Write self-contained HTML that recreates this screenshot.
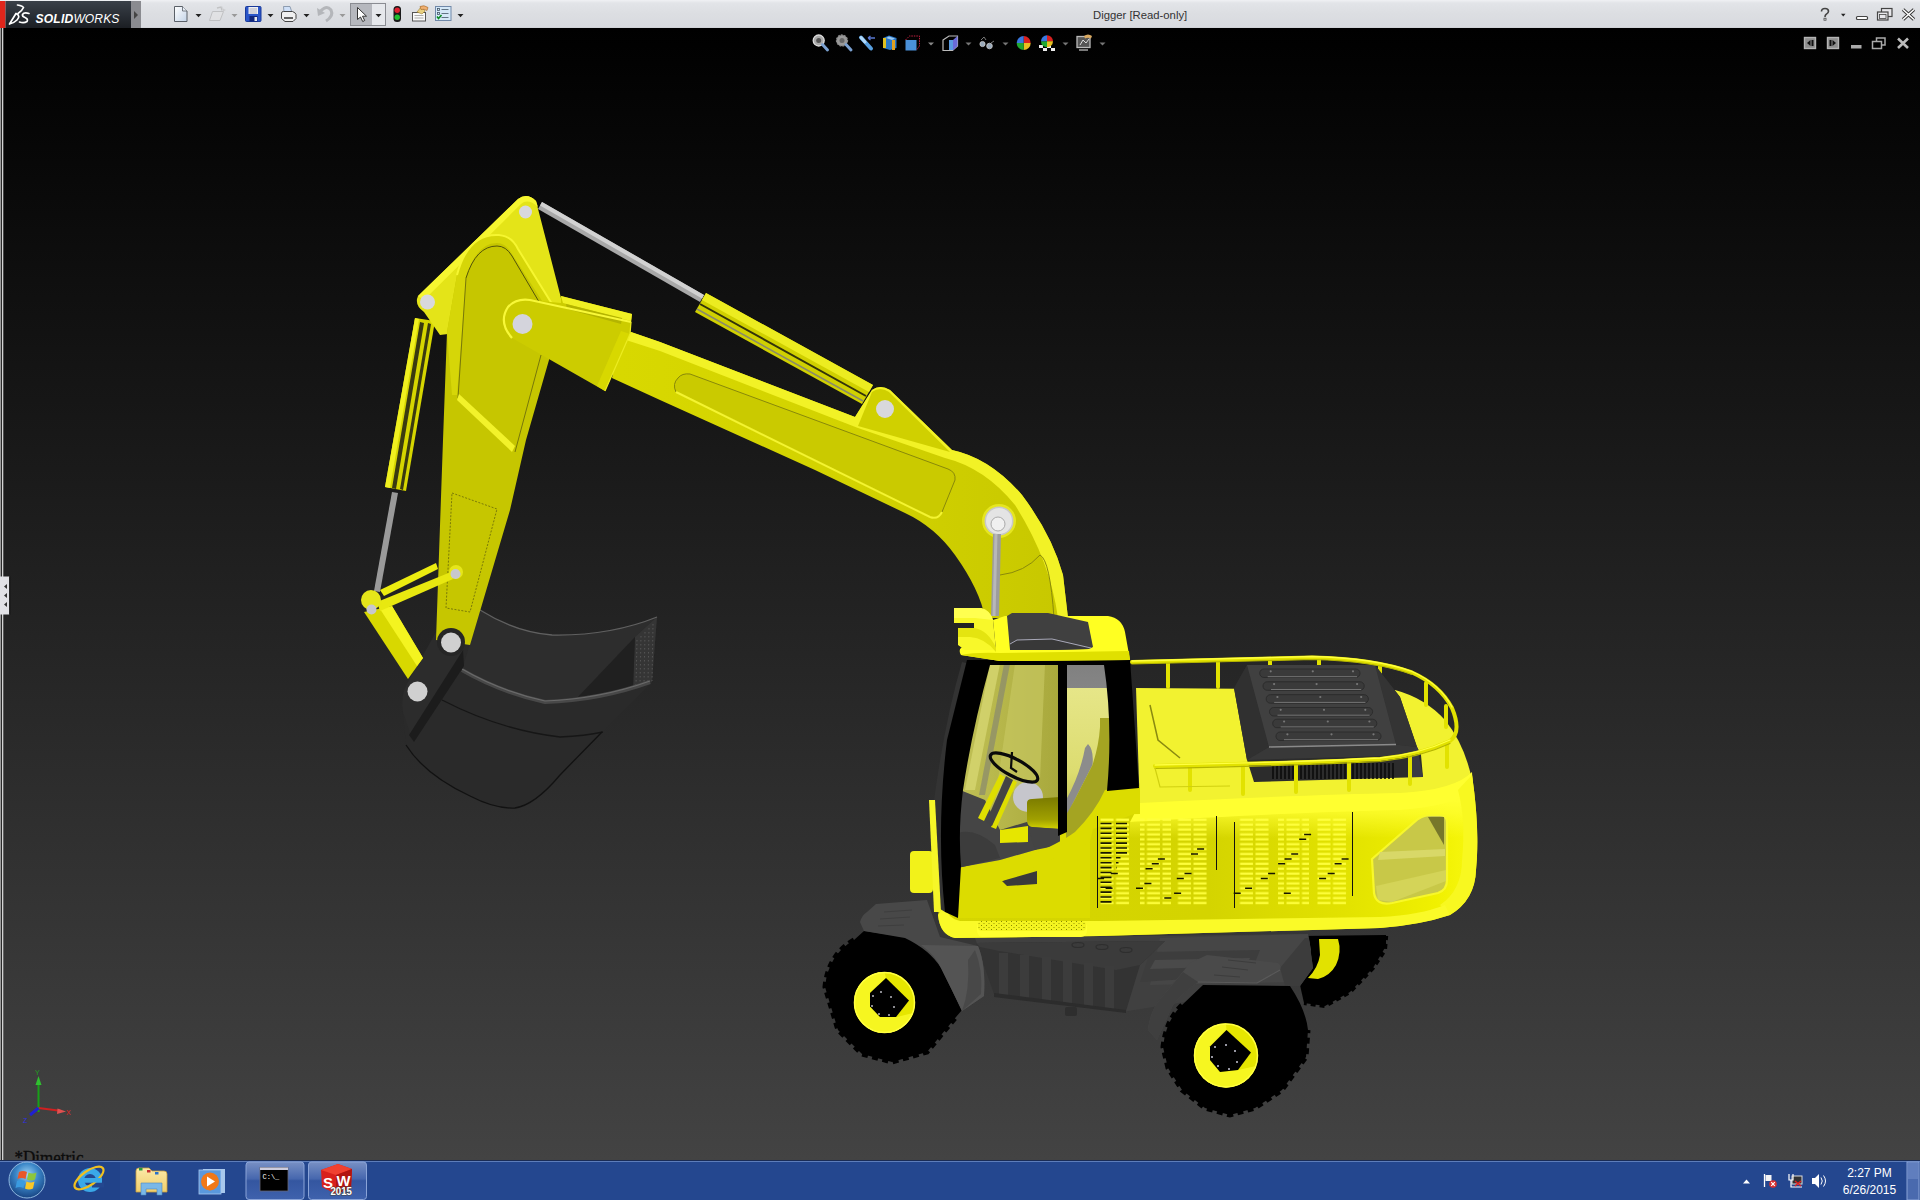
<!DOCTYPE html>
<html><head><meta charset="utf-8"><title>Digger [Read-only]</title>
<style>
html,body{margin:0;padding:0;width:1920px;height:1200px;overflow:hidden;background:#000;font-family:"Liberation Sans",sans-serif;}
#vp{position:absolute;left:0;top:28px;width:1920px;height:1132px;background:linear-gradient(#000 0%,#434343 100%);}
#tb{position:absolute;left:0;top:0;width:1920px;height:28px;background:linear-gradient(#f0f1f4 0,#e2e4e8 3px,#dcdee2 14px,#d8dadf 27px,#c9cbd0 28px);}
#task{position:absolute;left:0;top:1160px;width:1920px;height:40px;background:linear-gradient(90deg,#1d3f8e 0,#234a9c 8%,#1f4796 25%,#20479a 60%,#1b3c86 80%,#1e4492 100%);}
#task:before{content:"";position:absolute;left:0;top:0;width:100%;height:2px;background:linear-gradient(#16254f,#5f7fc0);}
svg{position:absolute;left:0;top:0;}
.t{position:absolute;white-space:nowrap;}
</style></head><body>
<div id="vp"></div>
<div id="tb"></div>
<div id="task"></div>
<svg id="model" width="1920" height="1200" viewBox="0 0 1920 1200">
<defs>
<linearGradient id="gRod" x1="0" y1="0" x2="0" y2="1"><stop offset="0" stop-color="#d0d0d0"/><stop offset=".5" stop-color="#b4b4b4"/><stop offset="1" stop-color="#808080"/></linearGradient>
<linearGradient id="gBoom" gradientUnits="userSpaceOnUse" x1="620" y1="0" x2="1060" y2="0"><stop offset="0" stop-color="#d8d800"/><stop offset=".55" stop-color="#d2d200"/><stop offset="1" stop-color="#c8c800"/></linearGradient>
</defs>
<!-- ===== bucket ===== -->
<g id="bucket">
<path d="M480,610 Q515,632 552,635 Q610,636 657,617 L652,682 L602,732 L560,775 Q535,805 515,808 Q495,809 470,796 Q425,775 406,745 L402,705 L445,640 Z" fill="#2a2a2a"/>
<path d="M480,610 Q515,632 552,635 Q610,636 657,617 L635,637 L578,697 Q545,705 515,695 L462,670 Z" fill="#2d2d2d"/>
<path d="M635,637 L657,617 L652,682 L633,688 Z" fill="#353535"/>
<path d="M635,637 L578,697 L633,688 Z" fill="#202020"/>
<g stroke="#555" stroke-width="1" stroke-dasharray="1.500 2.500"><path d="M637,640 L636,686"/><path d="M641,636 L640,685"/><path d="M645,632 L644,684"/><path d="M649,628 L648,683"/><path d="M653,624 L652,681"/></g>
<path d="M480,610 Q515,632 552,635 Q610,636 657,617" fill="none" stroke="#606060" stroke-width="1.300"/>
<path d="M462,670 Q500,692 545,702 Q600,700 650,682" fill="none" stroke="#484848" stroke-width="4"/>
<path d="M462,669 Q500,691 545,701 Q600,699 650,681" fill="none" stroke="#6a6a6a" stroke-width="1.200"/>
<path d="M442,700 Q500,730 560,737 Q585,736 603,732" fill="none" stroke="#161616" stroke-width="1.300"/>
<path d="M406,745 Q425,775 470,796 Q495,809 515,808 Q535,805 560,775 L602,732" fill="none" stroke="#121212" stroke-width="1.300"/>
<!-- bracket -->
<path d="M440,625 Q455,618 465,632 L463,652 L411,737 L403,712 Q400,695 408,682 Z" fill="#2c2c2c"/>
<path d="M463,650 L409,735 L414,742 L464,666 Z" fill="#1c1c1c"/>
</g>
<!-- ===== bucket link (yellow bar down to bucket) ===== -->
<path d="M364,612 L392,606 L423,658 L408,679 Z" fill="#d8d800"/>
<path d="M380,609 L392,606 L423,658 L417,666 Z" fill="#f4f420"/>
<!-- bucket cylinder rod -->
<path d="M392,492 L398,493 L380,592 L374,591 Z" fill="#9a9a9a"/>
<!-- bucket cylinder body -->
<path d="M415,318 L435,321 L406,491 L385,487 Z" fill="#d6d600"/>
<path d="M420,322 L424,323 L396,489 L392,488 Z" fill="#3a3a10"/>
<path d="M428,323 L431,324 L403,490 L400,489 Z" fill="#3a3a10"/>
<path d="M415,318 L419,319 L390,488 L385,487 Z" fill="#f0f020"/>
<!-- ===== stick ===== -->
<path d="M418,296 L518,199 Q527,192 536,201 L561,298 L561,320 L440,335 L424,312 Q414,305 418,296 Z" fill="#e4e418"/>
<path d="M418,296 L518,199 Q527,192 536,201 L538,207 Q528,198 521,204 L424,300 Z" fill="#f6f630"/>
<path d="M457,275 Q468,233 499,235 Q512,236 518,249 L557,312 L549,360 L526,440 L510,510 L470,645 L436,640 L443,440 L447,332 Z" fill="#c6c600"/>
<path d="M457,275 Q468,233 499,235 Q512,236 518,249 L557,312 L553,318 L512,254 Q506,243 497,243 Q476,243 466,278 L457,395 L452,395 L447,332 Z" fill="#d6d608"/>
<path d="M457,275 Q468,233 499,235 Q512,236 518,249 L557,312" fill="none" stroke="#f6f630" stroke-width="2"/>
<path d="M466,278 Q476,246 497,246 Q506,246 512,256 L545,312" fill="none" stroke="#55550a" stroke-width="1"/>
<path d="M466,278 L458,398" fill="none" stroke="#77770a" stroke-width="1"/>
<path d="M541,355 L515,452" fill="none" stroke="#77770a" stroke-width="1"/>
<path d="M457,400 L512,452 L515,446 L459,394 Z" fill="#f2f22a"/>
<path d="M452,493 L497,509 L470,612 L446,608 Z" fill="none" stroke="#66660a" stroke-width=".8" stroke-dasharray="2 1.5"/>
<!-- H link -->
<path d="M380,590 L436,563 L438,569 L384,596 Z" fill="#ecec10"/>
<path d="M377,602 L451,572 L453,579 L380,611 Z" fill="#e8e810"/>
<circle cx="371" cy="600" r="10" fill="#e6e61a"/>
<circle cx="456" cy="572" r="7" fill="#e6e61a"/>
<!-- pins on stick -->
<circle cx="525.500" cy="212" r="6.500" fill="#d8d8dc"/>
<circle cx="427.500" cy="302" r="7.500" fill="#d8d8dc"/>
<circle cx="371.500" cy="609.500" r="5" fill="#c8c8cc"/>
<circle cx="455.500" cy="574" r="5" fill="#c8c8cc"/>
<!-- bucket pins -->
<circle cx="451" cy="642" r="14" fill="#262626"/>
<circle cx="451" cy="642.500" r="10" fill="#d0d0d0"/>
<circle cx="417.500" cy="691.500" r="10" fill="#d0d0d0"/>
<!-- ===== boom ===== -->
<path d="M620,335 L631,332 L660,342 L855,417 L872,390 Q880,384 890,390 L952,450 Q990,458 1022,495 Q1052,535 1063,575 L1068,618 L985,618 Q980,590 955,555 Q935,527 905,513 L815,470 L660,400 L612,378 Z" fill="url(#gBoom)"/>
<path d="M631,332 L660,342 L855,417 L872,390 Q880,384 890,390 L952,450 Q990,458 1022,495 Q1052,535 1063,575 L1068,618 L1058,618 Q1050,560 1015,505 Q985,468 945,458 L858,428 L660,351 L626,340 Z" fill="#f2f226"/>
<path d="M858,426 L872,392 Q880,386 889,392 L950,452 Z" fill="#d0d000"/>
<!-- boom recess -->
<path d="M678,378 Q672,384 676,392 L930,517 Q938,520 942,512 L955,480 Q956,472 948,469 L690,374 Q682,373 678,378 Z" fill="#caca00" stroke="#88880a" stroke-width="1"/>
<path d="M676,392 L930,517 Q938,520 942,512" fill="none" stroke="#f4f430" stroke-width="2"/>
<path d="M1000,575 Q1025,572 1040,555 Q1050,560 1054,618" fill="none" stroke="#8a8a0a" stroke-width="1"/>
<!-- boom pins -->
<circle cx="885" cy="409" r="9" fill="#d8d8dc"/>
<circle cx="999" cy="521" r="17" fill="#e6e620"/>
<circle cx="999" cy="521" r="14.500" fill="#c8c8c8"/>
<circle cx="999" cy="521" r="13" fill="#e4e4e4"/>
<circle cx="998" cy="524" r="7" fill="#f0f0f0" stroke="#aaa" stroke-width="1"/>
<path d="M993,534 L1001,534 L999,616 L991,616 Z" fill="#9c9c9c"/><path d="M994.500,534 L997.500,534 L995.500,616 L992.500,616 Z" fill="#b8b8b8"/>
<!-- boom end bracket -->
<path d="M561,296 L632,314 L630,334 L605,391 L512,338 Q498,322 508,307 Q516,298 530,300 L561,303 Z" fill="#cccc00"/>
<path d="M561,296 L632,314 L631,321 L563,303 Z" fill="#f0f024"/>
<path d="M566,304 L622,318 L621,324 L567,309 Z" fill="#b4b400"/>
<path d="M512,338 Q498,322 508,307 Q516,298 530,300 L631,322" fill="none" stroke="#f8f838" stroke-width="2.200"/>
<path d="M630,334 L605,391 L597,386 L621,331 Z" fill="#d8d800"/>
<path d="M631,322 L630,334 L605,391" fill="none" stroke="#ecec20" stroke-width="1.200"/>
<circle cx="522.500" cy="324" r="10" fill="#d4d4dc"/>
<!-- ===== stick cylinder ===== -->
<path d="M538,209 L542,202 L704,295 L700,302 Z" fill="#a8a8a8"/>
<path d="M540,205.500 L542,202 L704,295 L702,298.500 Z" fill="#d2d2d2"/>
<path d="M706,293 L873,385 L862,404 L695,312 Z" fill="#d0d000"/>
<path d="M706,293 L873,385 L869,392 L702,300 Z" fill="#ecec20"/>
<path d="M700,304 L866,396" fill="none" stroke="#33330a" stroke-width="2"/>
<path d="M697,309 L863,401" fill="none" stroke="#8a8a6a" stroke-width="1.500"/>
<defs>
<linearGradient id="gSide" gradientUnits="userSpaceOnUse" x1="940" y1="0" x2="1478" y2="0"><stop offset="0" stop-color="#d6d600"/><stop offset=".5" stop-color="#d4d400"/><stop offset=".75" stop-color="#e2e200"/><stop offset=".92" stop-color="#f0f000"/><stop offset="1" stop-color="#f8f810"/></linearGradient>
<linearGradient id="gShoulder" gradientUnits="userSpaceOnUse" x1="0" y1="800" x2="0" y2="838"><stop offset="0" stop-color="#ffff30" stop-opacity="1"/><stop offset=".35" stop-color="#ffff30" stop-opacity=".75"/><stop offset="1" stop-color="#ffff30" stop-opacity="0"/></linearGradient>
<linearGradient id="gGlassF" x1="0" y1="0" x2="1" y2="0"><stop offset="0" stop-color="#c4c45a"/><stop offset=".5" stop-color="#b6b64a"/><stop offset="1" stop-color="#a8a83c"/></linearGradient>
<pattern id="vent" x="1100" y="817" width="15.5" height="4.9" patternUnits="userSpaceOnUse"><rect x="0.5" y="1.6" width="13" height="2.2" fill="#ffff3c"/></pattern>
<pattern id="dots" width="5" height="4" patternUnits="userSpaceOnUse"><rect width="5" height="4" fill="#f4f420"/><rect x="1" y="1" width="1" height="1" fill="#8a8a00"/><rect x="3.500" y="3" width="1" height="1" fill="#9a9a00"/></pattern>
</defs>
<!-- ===== far rear wheel ===== -->
<path d="M1300,936 L1386,935 L1386,946 L1373,968 L1350,992 L1325,1006 L1304,1003 L1300,985 Z" fill="#000"/>
<path d="M1302,940 L1386,938 L1385,950 L1373,968 L1350,992 L1325,1006 L1304,1003" fill="none" stroke="#000" stroke-width="4" stroke-dasharray="5 4"/>
<path d="M1319,939 L1338,939 Q1342,952 1336,965 Q1330,976 1318,979 L1308,978 Q1318,968 1320,955 Z" fill="#e2e200"/>
<!-- ===== undercarriage ===== -->
<g id="under">
<path d="M975,938 L1308,934 L1313,968 L1300,986 L1290,985 L1122,1012 L995,995 Z" fill="#404040"/>
<path d="M1160,938 L1308,934 L1311,950 L1295,982 L1150,985 Z" fill="#464646"/>
<path d="M1280,968 L1305,938 L1309,938 L1313,968 L1300,986 L1285,986 Z" fill="#3c3c3c"/>
<path d="M1150,952 L1260,950 L1250,975 L1140,982 Z" fill="#3d3d3d"/>
<path d="M1155,960 L1250,958 L1246,966 L1150,969 Z" fill="#4a4a4a"/>
<path d="M976,943 L1165,941 L1140,965 L1126,1011 L994,994 Z" fill="#333"/>
<path d="M976,943 L1165,941 L1140,965 L1116,970 L999,951 L980,947 Z" fill="#3b3b3b"/>
<g fill="none" stroke="#2e2e2e" stroke-width="1.200"><ellipse cx="1078" cy="945" rx="6" ry="2.500"/><ellipse cx="1102" cy="947" rx="6" ry="2.500"/><ellipse cx="1126" cy="950" rx="6" ry="2.500"/></g>
<g fill="#3c3c3c"><rect x="999" y="953" width="9" height="43"/><rect x="1020" y="955" width="9" height="45"/><rect x="1042" y="957" width="9" height="46"/><rect x="1063" y="960" width="9" height="46"/><rect x="1084" y="963" width="9" height="46"/><rect x="1105" y="966" width="9" height="44"/></g>
<path d="M994,993 L1126,1010 L1126,1013 L994,997 Z" fill="#2c2c2c"/>
<rect x="1065" y="1007" width="12" height="9" rx="2" fill="#2e2e2e"/>
</g>
<!-- ===== wheels ===== -->
<g id="wheelF">
<path d="M825,987 Q828,955 854,940 L864,931 L925,940 Q948,965 962,1010 L956,1017 L927,1052 L892,1062 L862,1054 L838,1030 Z" fill="#000"/>
<path d="M854,940 Q828,955 825,987 L838,1030 L862,1054 L892,1062 L927,1052 L956,1017" fill="none" stroke="#000" stroke-width="5" stroke-dasharray="6 4.500"/>
<circle cx="884.500" cy="1002.500" r="30.500" fill="#e6e600"/>
<path d="M884.500,972 A30.500,30.500 0 0 0 884.500,1033 A30.500,30.500 0 0 0 913,1013 L897,1017 L880,1017 L870,1006 L870,993 L886,978 Z" fill="#f6f620"/>
<circle cx="884.500" cy="1002.500" r="30" fill="none" stroke="#ffff40" stroke-width="1.500"/>
<path d="M886,978 L909,1000.500 L896,1017 L880,1017 L870,1006.500 L870,993 Z" fill="#000"/>
<g fill="#b8b8c0"><circle cx="881" cy="992" r="1"/><circle cx="891" cy="997" r="1"/><circle cx="894" cy="1007" r="1"/><circle cx="889" cy="1015" r="1"/><circle cx="879" cy="1014" r="1"/><circle cx="872" cy="1006" r="1"/><circle cx="873" cy="996" r="1"/></g>
</g>
<g id="wheelR">
<path d="M1163,1047 Q1166,1020 1182,1005 L1203,985 L1290,986 Q1306,1010 1308,1030 L1306,1057 L1282,1090 L1255,1108 L1230,1115 L1205,1108 L1182,1090 L1168,1068 Z" fill="#000"/>
<path d="M1182,1005 Q1166,1020 1163,1047 L1168,1068 L1182,1090 L1205,1108 L1230,1115 L1255,1108 L1282,1090 L1306,1057 L1308,1030" fill="none" stroke="#000" stroke-width="5" stroke-dasharray="6 4.500"/>
<circle cx="1226" cy="1055.500" r="32" fill="#e6e600"/>
<path d="M1226,1023.500 A32,32 0 0 0 1226,1087.500 A32,32 0 0 0 1256,1066 L1238,1070 L1220,1072 L1210,1060 L1210,1046.500 L1226.500,1030 Z" fill="#f6f620"/>
<circle cx="1226" cy="1055.500" r="31.500" fill="none" stroke="#ffff40" stroke-width="1.500"/>
<path d="M1226.500,1030 L1251,1052.500 L1238,1070 L1220,1072 L1210,1060 L1210,1046.500 Z" fill="#000"/>
<g fill="#c8c8d8"><circle cx="1215" cy="1047" r="1"/><circle cx="1226" cy="1045" r="1"/><circle cx="1235" cy="1051" r="1"/><circle cx="1237" cy="1062" r="1"/><circle cx="1229" cy="1069" r="1"/><circle cx="1218" cy="1066" r="1"/><circle cx="1212" cy="1057" r="1"/></g>
</g>
<!-- fenders (in front of wheels) -->
<g id="fenders">
<path d="M860,922 Q862,915 867,912 L876,904 L927,900 L940,937 L978,946 Q986,965 984,996 L962,1011 Q952,990 941,968 Q930,950 905,938 L864,931 Z" fill="#484848"/>
<path d="M921,945 L978,946 Q986,965 984,996 L962,1011 Q952,990 941,968 Q935,955 921,945 Z" fill="#545454"/>
<path d="M975,950 Q983,970 981,994 L962,1011 Q970,990 968,960 Z" fill="#484848"/>
<g stroke="#3e3e3e" stroke-width="1"><path d="M884,912 L912,910"/><path d="M880,919 L910,917"/><path d="M878,926 L904,925"/></g>
<path d="M1207,955 L1278,963 Q1282,966 1280,970 L1257,983 L1198,982 Q1180,995 1173,1005 L1157,1040 L1148,1030 Q1150,1010 1162,997 L1190,963 Z" fill="#4a4a4a"/>
<path d="M1198,982 Q1180,995 1173,1005 L1157,1040 L1148,1030 Q1150,1010 1162,997 L1183,972 Z" fill="#3f3f3f"/>
<path d="M1198,982 L1257,983 L1280,970" fill="none" stroke="#5a5a5a" stroke-width="1.200"/>
<g stroke="#3c3c3c" stroke-width="1"><path d="M1228,960 L1256,963"/><path d="M1222,967 L1248,970"/><path d="M1214,975 L1240,977"/></g>
</g>
<!-- ===== main body ===== -->
<g id="body">
<!-- deck -->
<path d="M1136,688 L1395,690 Q1425,698 1445,720 Q1465,745 1472,780 L1460,800 L1140,812 Z" fill="#f2f230"/>
<!-- side -->
<path d="M940,905 L960,868 L1139,788 L1140,806 Q1300,798 1400,796 Q1455,792 1472,775 Q1480,830 1476,870 Q1475,900 1450,915 Q1420,925 1380,928 L1100,936 L955,938 Q940,935 938,915 Z" fill="url(#gSide)"/>
<path d="M1130,822 Q1300,810 1400,808 Q1455,804 1473,788 L1476,830 L1470,838 L1130,840 Z" fill="url(#gShoulder)"/>
<path d="M1140,803 Q1300,795 1400,793 Q1455,790 1472,772 L1473,790 Q1455,806 1400,810 Q1300,812 1130,822 Z" fill="#ffff30"/>
<!-- rear round end -->
<path d="M1472,775 Q1480,830 1476,870 Q1475,900 1450,915 L1440,905 Q1462,890 1462,860 Q1466,820 1458,790 Z" fill="#f8f820"/>
<!-- cab lower door -->
<path d="M955,868 Q1000,862 1037,849 Q1075,830 1105,790 L1139,786 L1140,812 L1090,830 L1090,918 L958,918 Z" fill="#dcdc00"/>
<!-- vents -->
<g fill="url(#vent)"><rect x="1100" y="817" width="31" height="89"/><rect x="1140" y="817" width="31" height="89"/><rect x="1177" y="817" width="31" height="89"/><rect x="1238" y="817" width="31" height="89"/><rect x="1278" y="817" width="31" height="89"/><rect x="1316" y="817" width="31" height="89"/></g>
<g stroke="#1a1a00" stroke-width="1.600" stroke-dasharray="11 4.500"><path d="M1100.500,823.500 h29 M1100.500,828.400 h29 M1100.500,833.300 h29 M1100.500,838.200 h29 M1100.500,843.100 h29 M1100.500,848 h29 M1100.500,852.900 h29 M1100.500,857.800 h20 M1100.500,862.700 h18 M1100.500,867.600 h16 M1100.500,872.500 h14 M1100.500,877.400 h12 M1100.500,882.300 h12 M1100.500,887.200 h12 M1100.500,892.100 h12 M1100.500,897 h12 M1100.500,901.900 h12"/></g>
<g stroke="#111" stroke-width="1"><path d="M1097.500,816 V908"/><path d="M1216.500,816 V870"/><path d="M1234.500,822 V908"/><path d="M1352.500,812 V896"/></g>
<g stroke="#161600" stroke-width="1.500"><path d="M1110.8,873.6 h7 M1097.1,878.5 h7 M1105.6,888.3 h7 M1157.9,858.9 h7 M1151.8,863.8 h7 M1145.6,868.7 h7 M1144.4,883.4 h7 M1136.0,888.3 h7 M1184.5,873.6 h7 M1176.8,878.5 h7 M1197.1,849.1 h7 M1191.0,854.0 h7 M1174.1,893.2 h7 M1164.3,898.1 h7 M1245.1,888.3 h7 M1233.7,893.2 h7 M1268.1,873.6 h7 M1260.8,878.5 h7 M1291.2,854.0 h7 M1284.6,858.9 h7 M1278.1,863.8 h7 M1304.1,834.4 h7 M1299.2,839.3 h7 M1327.7,873.6 h7 M1319.1,878.5 h7 M1341.6,858.9 h7 M1334.6,863.8 h7 M1283.8,893.2 h7"/></g>
<!-- rear window -->
<path d="M1372,859 L1418,819 Q1424,815 1432,815 L1440,815 Q1447,815 1447,823 L1447,880 Q1447,890 1438,893 L1392,903 Q1376,906 1374,893 Z" fill="#c8c848" stroke="#f8f82a" stroke-width="2.200"/>
<path d="M1380,852 L1445,849 L1445,856 L1378,860 Z" fill="#d8d868"/>
<path d="M1376,886 L1446,870 L1446,881 L1392,902 L1378,900 Z" fill="#d4d458"/>
<path d="M1428,817 L1444,817 L1444,845 L1440,838 Z" fill="#77772a"/>
<!-- sill -->
<path d="M938,915 Q940,935 955,938 L1100,936 L1380,928 Q1420,925 1450,915 L1445,905 Q1420,915 1380,917 L1100,921 L960,921 Q947,918 945,905 Z" fill="#fafa28"/>
<!-- step -->
<rect x="977" y="921" width="110" height="16" rx="6" fill="#ffff30"/>
<rect x="978" y="921" width="108" height="10" rx="4" fill="url(#dots)"/>
<!-- door handle -->
<path d="M1002,881 L1037,871 L1037,884 L1007,886 Z" fill="#3a3a3a"/>
</g>
<defs>
<linearGradient id="gRear" x1="0" y1="0" x2="0" y2="1"><stop offset="0" stop-color="#808080"/><stop offset=".13" stop-color="#858585"/><stop offset=".135" stop-color="#e6e688"/><stop offset=".6" stop-color="#dcdc70"/><stop offset="1" stop-color="#b0b038"/></linearGradient>
<linearGradient id="gSeat" x1="0" y1="0" x2="0" y2="1"><stop offset="0" stop-color="#7a7a00"/><stop offset=".7" stop-color="#a0a000"/><stop offset="1" stop-color="#d4d400"/></linearGradient>
</defs>
<g id="cab">
<!-- windshield (front glass seen edge-on, dark) -->
<path d="M962,662 Q945,720 934,800 L934,905 L945,912 L952,740 L970,664 Z" fill="#333"/>
<!-- yellow front guard + mirror box -->
<rect x="910" y="851" width="23" height="42" rx="4" fill="#f2f21a"/>
<path d="M929,800 L935,800 L941,912 L934,912 Z" fill="#f6f628"/>
<!-- interior: door window -->
<path d="M988,664 L1060,664 L1060,838 L1035,850 L1000,860 L956,868 L945,800 L960,735 Z" fill="url(#gGlassF)"/>
<!-- streaks -->
<path d="M990,664 L1000,664 L975,790 L965,790 Z" fill="#d6d670" opacity=".8"/>
<path d="M1004,664 L1010,664 L985,795 L979,795 Z" fill="#8e8e6a" opacity=".8"/>
<path d="M1015,664 L1045,664 L1040,780 L995,800 Z" fill="#c6c660" opacity=".7"/>
<!-- dark interior floor -->
<path d="M960,790 L985,800 L1000,830 L1060,812 L1060,838 L1035,850 L1000,860 L956,868 L950,830 Z" fill="#454545"/>
<path d="M958,833 Q975,828 995,845 L1000,858 L958,868 Z" fill="#3c3c3c"/>
<!-- gray circle -->
<circle cx="1028" cy="797" r="15" fill="#c6c6cc"/>
<!-- yellow floor -->
<path d="M1000,830 L1028,826 L1028,842 L1000,843 Z" fill="#e6e600"/>
<!-- seat -->
<path d="M1027,803 Q1027,799 1032,799 L1060,797 L1060,829 L1032,827 Q1027,826 1027,820 Z" fill="url(#gSeat)"/>
<path d="M1028,827 L1060,829 L1060,845 L1035,850 Z" fill="#444"/>
<!-- steering column -->
<path d="M1000,774 L1005,777 L984,821 L978,818 Z" fill="#dede00"/>
<path d="M1013,780 L1017,782 L996,829 L991,827 Z" fill="#dede00"/>
<path d="M1006,776 L1013,780 L992,826 L986,822 Z" fill="#444"/>
<!-- steering wheel -->
<ellipse cx="1014" cy="767.500" rx="26.500" ry="8.500" transform="rotate(28 1014 767.500)" fill="none" stroke="#0a0a0a" stroke-width="3.200"/>
<path d="M1012,752 L1011,768 L1017,772" fill="none" stroke="#0a0a0a" stroke-width="2.200"/>
<!-- rear window -->
<path d="M1066,664 L1106,664 L1112,720 L1112,800 L1066,845 Z" fill="url(#gRear)"/>
<path d="M1088,744 Q1094,750 1092.500,765 L1073,803 L1066,817 L1066,800 Q1080,775 1085,748 Z" fill="#8c8c8c"/>
<path d="M1100,718 L1113,718 L1112,792 L1092,820 L1070,840 L1066,840 L1066,815 L1073,803 L1092.500,765 Q1099,745 1100,727 Z" fill="#a4a422"/>
<!-- door top edge (covers interior overflow) -->
<path d="M955,868.500 Q1000,864 1027,857 Q1060,843 1075,832 Q1095,812 1105,790 L1140,786 L1140,814 L1096,815 L1090,842 L1000,882 L955,882 Z" fill="#dcdc00"/>
<!-- black frame -->
<path d="M967,660 L1130,659 L1139,788 L1107,791 Q1113,725 1104,665 L1067,665 L1067,832 L1058,836 L1058,665 L990,665 Q972,730 963,790 Q958,830 961,866 L958,918 L945,912 Q936,830 947,740 Z" fill="#000"/>
<!-- roof -->
<path d="M961,655 Q957,648 965,646 L996,650 L993,620 L1005,616 L1108,616 Q1122,618 1125,632 L1130,660 L1000,661 Z" fill="#ffff22"/>
<path d="M961,655 Q975,652 1000,653 L1129,651 L1130,660 L1000,661 Z" fill="#e0e000"/>
<!-- hooks -->
<path d="M954,608 L981,608 Q990,610 993,620 L996,650 L965,650 L958,645 L958,628 L974,628 L974,623 L954,623 Z" fill="#f8f82a"/>
<path d="M954,608 L981,608 Q990,610 993,620 L975,618 L954,618 Z" fill="#ffff50"/>
<path d="M974,628 Q988,630 996,648 L996,652 Q985,638 970,637 L958,637 L958,628 Z" fill="#e4e410"/>
<!-- roof hatch -->
<path d="M1007,616 L1012,613 L1048,613 L1088,622 L1093,647 L1089,649 L1052,650 L1010,650 Z" fill="#404040"/>
<path d="M1010,644 L1017,640 L1052,639 L1089,649 L1052,650 L1010,650 Z" fill="#383838"/>
<path d="M1010,644 L1017,640 L1052,639 L1091,648" fill="none" stroke="#a8a8b8" stroke-width="1"/>
</g>
<!-- ===== deck items ===== -->
<g id="deck">
<path d="M1150,705 L1158,740 L1180,758" fill="none" stroke="#8a8a10" stroke-width="1.500"/>
<g fill="none" stroke="#e2e200" stroke-width="4" stroke-linecap="round"><path d="M1270,660V684M1319,659V684M1380,665V690"/></g>
<!-- engine hatch -->
<path d="M1247,665 L1375,665 L1400,697 L1417,747 L1421,755 L1423,777 L1254,782 L1247,760 L1234,688 Z" fill="#2c2c2c"/>
<path d="M1247,665 L1234,688 L1247,760 L1269,747 Z" fill="#303030"/>
<path d="M1375,665 L1400,697 L1417,747 L1396,744.500 Z" fill="#343434"/>
<path d="M1247,665 L1375,665 L1396,744.500 L1269,747 Z" fill="#404040"/>
<rect x="1259.7" y="669.0" width="100.3" height="8.5" rx="4.2" fill="#3a3a3a" stroke="#2c2c2c" stroke-width="1"/>
<path d="M1267.7,676.7 H1357.0" stroke="#7c7c7c" stroke-width=".9"/>
<circle cx="1270.7" cy="671.3" r="1.1" fill="#777"/>
<circle cx="1312.8" cy="671.3" r="1.1" fill="#777"/>
<circle cx="1353.0" cy="671.3" r="1.1" fill="#777"/>
<rect x="1263.0" y="681.8" width="101.2" height="8.5" rx="4.2" fill="#3a3a3a" stroke="#2c2c2c" stroke-width="1"/>
<path d="M1271.0,689.5 H1361.2" stroke="#7c7c7c" stroke-width=".9"/>
<circle cx="1274.1" cy="684.1" r="1.1" fill="#777"/>
<circle cx="1316.6" cy="684.1" r="1.1" fill="#777"/>
<circle cx="1357.1" cy="684.1" r="1.1" fill="#777"/>
<rect x="1266.2" y="694.7" width="102.2" height="8.5" rx="4.2" fill="#3a3a3a" stroke="#2c2c2c" stroke-width="1"/>
<path d="M1274.2,702.4 H1365.4" stroke="#7c7c7c" stroke-width=".9"/>
<circle cx="1277.4" cy="697.0" r="1.1" fill="#777"/>
<circle cx="1320.3" cy="697.0" r="1.1" fill="#777"/>
<circle cx="1361.2" cy="697.0" r="1.1" fill="#777"/>
<rect x="1269.5" y="707.5" width="103.1" height="8.5" rx="4.2" fill="#3a3a3a" stroke="#2c2c2c" stroke-width="1"/>
<path d="M1277.5,715.2 H1369.6" stroke="#7c7c7c" stroke-width=".9"/>
<circle cx="1280.7" cy="709.8" r="1.1" fill="#777"/>
<circle cx="1324.0" cy="709.8" r="1.1" fill="#777"/>
<circle cx="1365.3" cy="709.8" r="1.1" fill="#777"/>
<rect x="1272.7" y="719.2" width="104.1" height="8.5" rx="4.2" fill="#3a3a3a" stroke="#2c2c2c" stroke-width="1"/>
<path d="M1280.7,726.9 H1373.8" stroke="#7c7c7c" stroke-width=".9"/>
<circle cx="1284.1" cy="721.5" r="1.1" fill="#777"/>
<circle cx="1327.8" cy="721.5" r="1.1" fill="#777"/>
<circle cx="1369.4" cy="721.5" r="1.1" fill="#777"/>
<rect x="1276.0" y="732.0" width="105.0" height="8.5" rx="4.2" fill="#3a3a3a" stroke="#2c2c2c" stroke-width="1"/>
<path d="M1284.0,739.7 H1378.0" stroke="#7c7c7c" stroke-width=".9"/>
<circle cx="1287.4" cy="734.3" r="1.1" fill="#777"/>
<circle cx="1331.5" cy="734.3" r="1.1" fill="#777"/>
<circle cx="1373.5" cy="734.3" r="1.1" fill="#777"/>
<path d="M1269,747 L1396,744.500 L1417,747 L1421,755 L1247,760 Z" fill="#383838"/>
<path d="M1269,747 L1396,744.500" fill="none" stroke="#8a8a8a" stroke-width="1.300"/>
<path d="M1417,747 L1423,777 L1412,777 L1408,756 Z" fill="#3a3a44"/>
<path d="M1273,763V779 M1277,763V779 M1281,763V779 M1285,763V779 M1289,763V779 M1293,763V779 M1297,763V779 M1301,763V779 M1305,763V779 M1309,763V779 M1313,763V779 M1317,763V779 M1321,763V779 M1325,763V779 M1329,763V779 M1333,763V779 M1337,763V779 M1341,763V779 M1345,763V779 M1349,763V779 M1353,763V779 M1357,763V779 M1361,763V779 M1365,763V779 M1369,763V779 M1373,763V779 M1377,763V779 M1381,763V779 M1385,763V779 M1389,763V779 M1393,763V779" stroke="#0c0c0c" stroke-width="1.600"/>
<!-- railing -->
<g fill="none" stroke="#e2e200" stroke-width="4" stroke-linecap="round">
<path d="M1168,663V687M1218,662V687M1426,683V705M1446,706V727"/>
<path d="M1190,766V790M1243,765V794M1296,763V792M1349,762V790M1410,756V784M1447,743V767"/>
<path d="M1132,662 L1312,657.500 Q1375,659 1412,672.500 Q1440,685 1452,708 Q1462,732 1450,741 Q1420,755 1380,759 Q1300,763 1155,766"/>
</g>
<g fill="none" stroke="#b4b400" stroke-width="1.200" stroke-linecap="round">
<path d="M1132,664 L1312,659.500 Q1375,661 1412,674.500"/>
<path d="M1450,743.500 Q1420,757.500 1380,761.500 Q1300,765.500 1155,768.500"/>
</g>
<g fill="none" stroke="#ffff40" stroke-width="1.300" stroke-linecap="round">
<path d="M1132,661 L1312,656.500 Q1375,658 1412,671.500 Q1440,684 1452,707"/>
<path d="M1450,740 Q1420,754 1380,758 Q1300,762 1155,765"/>
</g>
</g>
<path d="M1155,768 L1160,787 L1230,786" fill="none" stroke="#d0d010" stroke-width="1.200"/>
</g>
</svg>
<svg id="chrome" width="1920" height="1200" viewBox="0 0 1920 1200">
<defs>
<linearGradient id="cLogo" x1="0" y1="0" x2="0" y2="1"><stop offset="0" stop-color="#3a4048"/><stop offset=".5" stop-color="#2a2f36"/><stop offset="1" stop-color="#1b1e23"/></linearGradient>
<linearGradient id="cPage" x1="0" y1="0" x2="1" y2="1"><stop offset="0" stop-color="#fff"/><stop offset="1" stop-color="#c4d4e8"/></linearGradient>
<radialGradient id="cOrb" cx=".5" cy=".35" r=".7"><stop offset="0" stop-color="#9fd4f4"/><stop offset=".45" stop-color="#3a86c8"/><stop offset="1" stop-color="#123a78"/></radialGradient>
<linearGradient id="cBtn" x1="0" y1="0" x2="0" y2="1"><stop offset="0" stop-color="#7890c4"/><stop offset=".45" stop-color="#4667ae"/><stop offset=".5" stop-color="#3456a0"/><stop offset="1" stop-color="#3f62ad"/></linearGradient>
<linearGradient id="cFold" x1="0" y1="0" x2="0" y2="1"><stop offset="0" stop-color="#fbe9a8"/><stop offset="1" stop-color="#f1cf6c"/></linearGradient>
</defs>
<!-- left edge -->
<rect x="0" y="28" width="1" height="1132" fill="#9a9a9a"/><rect x="1" y="28" width="1" height="1132" fill="#2a2a2a"/><rect x="2" y="28" width="1.300" height="1132" fill="#d4d4d4"/>
<rect x="0" y="576.500" width="9.300" height="38" fill="#e2e2e6"/><rect x="9.300" y="576.500" width="1" height="38" fill="#111"/>
<g fill="#333"><path d="M7,584 v5 l-3,-2.500z"/><path d="M7,593 v5 l-3,-2.500z"/><path d="M7,602 v5 l-3,-2.500z"/></g>
<!-- title logo -->
<rect x="0" y="1" width="5.500" height="27" fill="#e0261c"/>
<rect x="5.500" y="1" width="125.500" height="27" fill="url(#cLogo)"/>
<rect x="131" y="1" width="10" height="27" fill="#8a8b90"/>
<path d="M134,11 l4,4 l-4,4z" fill="#444"/>
<g fill="none" stroke="#fff" stroke-width="1.700" stroke-linecap="round" stroke-linejoin="round">
<path d="M17.500,5 Q23,6 23.500,7.500 Q22,11 18,13.500"/>
<path d="M9.500,24 L16,13.500 Q21,16 17,20 Q14,23 9.500,24"/>
<path d="M29,13.500 Q24,12 22.500,14.500 Q22,16.500 25,17.500 Q28.500,19 27,21.500 Q24,23.500 19.500,22"/>
</g>
<text x="35.500" y="22.600" font-family="Liberation Sans, sans-serif" font-size="12.600" font-style="italic" fill="#fff" textLength="84" lengthAdjust="spacingAndGlyphs"><tspan font-weight="bold" letter-spacing=".2">SOLID</tspan><tspan letter-spacing=".1">WORKS</tspan></text>
<!-- toolbar icons -->
<g id="tbicons">
<path d="M174.500,6.500 h8 l4.500,4.500 v10.500 h-12.500z" fill="url(#cPage)" stroke="#5a6068" stroke-width="1"/>
<path d="M182.500,6.500 v4.500 h4.500" fill="#e8eef6" stroke="#5a6068" stroke-width=".8"/>
<path d="M195.500,14 h6 l-3,3.300z" fill="#222"/>
<g opacity=".55"><path d="M209.500,20.500 l3,-9 h11 l-3.500,9z" fill="#e6e6e6" stroke="#aaa" stroke-width="1"/><path d="M217,8 l4,-1 l1,3.500" fill="none" stroke="#aaa" stroke-width="1.300"/><path d="M222,6 l1.500,3 l2.500,1 l-3,1.500z" fill="#bbb"/></g>
<path d="M231.500,14 h6 l-3,3.300z" fill="#999"/>
<rect x="245.500" y="6.500" width="15.500" height="15" rx="1" fill="#2a55c8" stroke="#1a3a9a" stroke-width="1"/>
<rect x="248.500" y="7" width="9.500" height="7" fill="#eef0f4"/><path d="M249.500,9 h7.500 M249.500,11 h7.500 M249.500,13 h7.500" stroke="#99a" stroke-width=".7"/>
<rect x="249.500" y="16" width="8" height="5.500" fill="#10257a"/><rect x="254.500" y="17" width="2.500" height="4" fill="#e8eaf0"/>
<path d="M267.500,14 h6 l-3,3.300z" fill="#222"/>
<path d="M283.500,6.500 h6.500 l2,6 h-8z" fill="#cfe0f8" stroke="#7a8aa0" stroke-width=".8"/>
<path d="M281.500,13 q0,-1.500 2,-1.500 h9 q3,1 3.500,3 v4 l-3,3 h-8 l-3.500,-3z" fill="#f0f0f0" stroke="#444" stroke-width="1"/>
<path d="M284,18 h9" stroke="#333" stroke-width="1.500"/>
<path d="M303.500,14 h6 l-3,3.300z" fill="#222"/>
<path d="M319,13 Q326,4 331,10 Q334,16 326,21" fill="none" stroke="#b4b6ba" stroke-width="3"/><path d="M317,8 l1,8 l7,-3z" fill="#b4b6ba"/>
<path d="M339.500,14 h6 l-3,3.300z" fill="#999"/>
<rect x="350.500" y="3.500" width="35" height="22" fill="#e6e8ec" stroke="#8a8c92" stroke-width="1"/>
<rect x="351" y="4" width="21" height="21" fill="#b6b8be"/>
<path d="M357.500,7.500 v12 l3,-2.500 l2.200,4.500 l2,-1 l-2.200,-4.300 h4z" fill="#fff" stroke="#333" stroke-width="1"/>
<path d="M375.500,14 h6 l-3,3.300z" fill="#222"/>
<rect x="393.500" y="6" width="7.500" height="16" rx="3.500" fill="#1a1a1a"/><circle cx="397.200" cy="10.300" r="2.700" fill="#e02030"/><circle cx="397.200" cy="17.300" r="2.700" fill="#20c030"/>
<rect x="412.500" y="12.500" width="13" height="8.500" fill="#fafafa" stroke="#555" stroke-width="1"/><path d="M414.500,15.500 h9 M414.500,18 h9" stroke="#999" stroke-width=".8"/>
<path d="M417,12 l4,-5 l4,4 l-3,3z" fill="#e8d080" stroke="#a08030" stroke-width=".6"/><path d="M420,6.500 q4,-2 8,1 l-1,3 q-3,-2 -6,-1z" fill="#f0b070" stroke="#a06020" stroke-width=".6"/>
<rect x="435.500" y="6.500" width="15.500" height="14" fill="#d4e8f8" stroke="#7088a8" stroke-width="1"/>
<g fill="none" stroke="#456" stroke-width=".8"><rect x="437.500" y="8.500" width="2" height="2"/><rect x="437.500" y="12.500" width="2" height="2"/><path d="M441.500,9.500 h7 M441.500,13.500 h7 M441.500,17.500 h7"/></g>
<path d="M437,16.500 l1.500,2 l3,-3.500" fill="none" stroke="#0a8a20" stroke-width="1.600"/>
<path d="M457.500,14 h6 l-3,3.300z" fill="#222"/>
</g>
<!-- title text -->
<text x="1093" y="19.300" font-family="Liberation Sans, sans-serif" font-size="11.300" fill="#333">Digger [Read-only]</text>
<!-- window controls -->
<g fill="none" stroke="#444" stroke-width="1.200">
<path d="M1821.500,11.500 q0,-3 3.500,-3 q3.500,0 3.500,2.800 q0,2 -2.500,3.200 q-1,.6 -1,2.500" stroke-width="1.600"/><rect x="1824" y="18.200" width="2" height="2" fill="#fff" stroke-width=".8"/>
<path d="M1841,13.800 h4.500 l-2.250,2.700z" fill="#222" stroke="none"/>
<rect x="1856.500" y="16.500" width="11" height="3" rx="1" fill="#fff"/>
<rect x="1881.500" y="8.500" width="10.500" height="8" fill="#e8e8ec"/><rect x="1877.500" y="12" width="10.500" height="8" fill="#e8e8ec"/><rect x="1879.500" y="14.500" width="6.500" height="4" stroke-width=".8"/>
<path d="M1903,9.500 l11,10 M1914,9.500 l-11,10" stroke-width="3.400" stroke="#333"/><path d="M1903,9.500 l11,10 M1914,9.500 l-11,10" stroke-width="1.600" stroke="#fff"/>
</g>
<!-- inner window controls -->
<g>
<rect x="1804.500" y="37.500" width="11" height="11" fill="#8e8e8e" stroke="#b4b4b4" stroke-width="1.400"/><path d="M1810.500,40 v6 l-3.500,-3z" fill="#111"/><rect x="1811.500" y="40" width="2" height="6" fill="#111"/>
<rect x="1827.500" y="37.500" width="11" height="11" fill="#8e8e8e" stroke="#b4b4b4" stroke-width="1.400"/><path d="M1832.500,40 v6 l3.500,-3z" fill="#111"/><rect x="1829.500" y="40" width="2" height="6" fill="#111"/>
<rect x="1851" y="45" width="10.500" height="3.500" fill="#aaa"/>
<rect x="1876.500" y="38" width="8.500" height="7" fill="none" stroke="#aaa" stroke-width="1.500"/><rect x="1872.500" y="41.500" width="9" height="7" fill="#000" stroke="#aaa" stroke-width="1.500"/>
<path d="M1898,38.500 l10,9.500 M1908,38.500 l-10,9.500" stroke="#bbb" stroke-width="2.600"/>
</g>
<!-- heads-up view toolbar -->
<g id="hud">
<circle cx="818.700" cy="40.500" r="5.500" fill="#aaa" stroke="#ddd" stroke-width="1.300"/><circle cx="818.700" cy="40.500" r="2.500" fill="#555"/><path d="M822.500,44.500 l5,5.500" stroke="#7aa0d0" stroke-width="3" stroke-linecap="round"/>
<circle cx="842" cy="40.500" r="5.500" fill="#999" stroke="#888" stroke-width="1.300" stroke-dasharray="2 1"/><circle cx="842" cy="40.500" r="2.500" fill="#666"/><path d="M846,44.500 l5,5.500" stroke="#7aa0d0" stroke-width="3" stroke-linecap="round"/>
<path d="M861,37.500 l10,11" stroke="#58a0e0" stroke-width="4" stroke-linecap="round"/><path d="M861,37.500 l4,4.500" stroke="#b0d8f8" stroke-width="3" stroke-linecap="round"/><path d="M868,38 h7 M868,38 l2.500,-2 M868,38 l2.500,2" stroke="#5a78d0" stroke-width="1.300" fill="none"/>
<path d="M883,38 l6,-2.500 l7.500,2.500 v10 l-6.500,2 l-7,-2z" fill="#2a78c8"/><rect x="883" y="38" width="3" height="10" fill="#e0c020"/><rect x="892" y="40" width="3" height="10" fill="#e0a020"/><path d="M886,38 l3,-1.500 l6,2 l-3,1.500z" fill="#9ac8f0"/>
<rect x="905.500" y="40" width="11" height="10.500" fill="#4a90d8"/><path d="M905.500,40 l4,-4 h10 v10 l-3,4" fill="none" stroke="#c02040" stroke-width="1" stroke-dasharray="1.500 1"/>
<path d="M928,42.500 h6 l-3,3z" fill="#888"/>
<path d="M943,40 l6,-4 h8.500 v10 l-5,4.500 h-9.500z" fill="none" stroke="#bbb" stroke-width="1.200"/><path d="M949,40 h4 v10 h-4z" fill="#5a9ae0"/><path d="M953,40 l4.500,-4 v10 l-4.500,4.500z" fill="#6a6ad8"/>
<path d="M965.500,42.500 h6 l-3,3z" fill="#777"/>
<circle cx="982.500" cy="44" r="2.600" fill="#9ab" stroke="#ccc" stroke-width=".8"/><circle cx="989.500" cy="46" r="2.800" fill="#9ab" stroke="#ccc" stroke-width=".8"/><path d="M981,40 l3,-3 l2,3 M991,43 l3,-2" stroke="#777" stroke-width="1" fill="none"/>
<path d="M1002.500,42.500 h6 l-3,3z" fill="#777"/>
<path d="M1023.700,43 v-7 a7,7 0 0 1 7,7z" fill="#d82020"/><path d="M1023.700,43 h7 a7,7 0 0 1 -7,7z" fill="#e8c020"/><path d="M1023.700,43 v7 a7,7 0 0 1 -7,-7z" fill="#20a830"/><path d="M1023.700,43 h-7 a7,7 0 0 1 7,-7z" fill="#3a78e0"/>
<g fill="#eee"><rect x="1039" y="45" width="4" height="3"/><rect x="1047" y="45" width="4" height="3"/><rect x="1043" y="48" width="4" height="3"/><rect x="1051" y="48" width="4" height="3"/></g>
<path d="M1047,41.300 v-6 a6,6 0 0 1 6,6z" fill="#d82020"/><path d="M1047,41.300 h6 a6,6 0 0 1 -6,6z" fill="#e8c020"/><path d="M1047,41.300 v6 a6,6 0 0 1 -6,-6z" fill="#20a830"/><path d="M1047,41.300 h-6 a6,6 0 0 1 6,-6z" fill="#3a78e0"/>
<path d="M1062.500,42.500 h6 l-3,3z" fill="#777"/>
<rect x="1077" y="36.500" width="13" height="11" fill="#555" stroke="#bbb" stroke-width="1.300"/><path d="M1079,50 h9" stroke="#bbb" stroke-width="1.300"/><path d="M1080,45 l3,-5 l3,3 l3,-4" stroke="#ddd" stroke-width="1" fill="none"/><path d="M1084,36 q4,-3 8,0 l-1,2.500 q-3,-1.500 -6,0z" fill="#d8a860"/>
<path d="M1099.500,42.500 h6 l-3,3z" fill="#777"/>
</g>
<!-- triad -->
<g id="triad">
<path d="M38.500,1112 V1082" stroke="#18a018" stroke-width="2"/><path d="M38.500,1076 l3,9 h-6z" fill="#30c030"/>
<path d="M38.500,1108 L62,1111" stroke="#d02020" stroke-width="2"/><path d="M66,1111.500 l-9,2.500 l.5,-5.500z" fill="#e05050"/>
<path d="M38.500,1108 L30,1115" stroke="#2020d0" stroke-width="3"/>
<text x="35" y="1075" font-family="Liberation Sans, sans-serif" font-size="7" fill="#20a020">Y</text>
<text x="66" y="1115" font-family="Liberation Sans, sans-serif" font-size="7" fill="#e02020">X</text>
<text x="23" y="1123" font-family="Liberation Sans, sans-serif" font-size="7" fill="#3030e0">Z</text>
</g>
<text x="14.500" y="1164" font-family="Liberation Serif, serif" font-size="18" fill="#0c0c0c" stroke="#0c0c0c" stroke-width=".35" textLength="69" lengthAdjust="spacingAndGlyphs">*Dimetric</text>
<!-- taskbar (drawn over text) -->
<rect x="0" y="1160" width="1920" height="40" fill="#24478f"/>
<rect x="0" y="1160" width="1920" height="1" fill="#1a2c55"/><rect x="0" y="1161" width="1920" height="1" fill="#5d7dba"/>
<rect x="0" y="1162" width="120" height="38" fill="#1e3f86" opacity=".5"/>
<!-- start orb -->
<circle cx="27" cy="1180" r="18" fill="url(#cOrb)" stroke="#8fb8e0" stroke-width="1"/>
<path d="M19,1172 q4,-2 8,0 l-1.500,7 q-4,-2 -8,0z" fill="#e8582a"/><path d="M28.500,1172.500 q4,2 8,0 l-1.500,7 q-4,2 -8,0z" fill="#8cc63e"/>
<path d="M17,1181 q4,-2 8,0 l-1.500,7 q-4,-2 -8,0z" fill="#3a9be0"/><path d="M26.500,1181.500 q4,2 8,0 l-1.500,7 q-4,2 -8,0z" fill="#f8c828"/>
<!-- IE -->
<circle cx="90" cy="1180" r="12" fill="#3aa8e8"/><circle cx="90" cy="1180" r="6" fill="#24478f"/><rect x="84" y="1178" width="18" height="4.500" fill="#3aa8e8"/><rect x="92" y="1182.500" width="12" height="5" fill="#24478f"/>
<ellipse cx="89" cy="1178" rx="17" ry="7" transform="rotate(-35 89 1178)" fill="none" stroke="#f0c020" stroke-width="2.200"/>
<path d="M84,1178 h18 v4.500 h-18z" fill="#3aa8e8"/>
<!-- explorer -->
<path d="M136,1171 q0,-3 3,-3 h10 l3,3 h12 q3,0 3,3 v18 h-31z" fill="url(#cFold)" stroke="#c8a040" stroke-width=".8"/>
<rect x="139" y="1168" width="3.500" height="2.500" fill="#2a9a3a"/><rect x="147" y="1170" width="3.500" height="2.500" fill="#c83030"/><rect x="155" y="1172" width="3.500" height="2.500" fill="#2a70c8"/>
<path d="M141,1183 h21 v12 h-5 v-6 h-11 v6 h-5z" fill="#7ab8e8" stroke="#4a88c0" stroke-width=".6"/>
<!-- media player -->
<rect x="203" y="1169" width="22" height="24" fill="#a8c8ec"/><rect x="199" y="1170" width="22" height="24" fill="#5a98dc" stroke="#a8c8f0" stroke-width=".8"/>
<circle cx="210" cy="1181.500" r="9" fill="#f07818"/><path d="M207,1176.500 v10 l8,-5z" fill="#fff"/>
<!-- task buttons -->
<rect x="246" y="1162" width="58" height="37.500" rx="3" fill="url(#cBtn)" stroke="#8aa4d8" stroke-width="1"/>
<rect x="308.500" y="1162" width="58" height="37.500" rx="3" fill="url(#cBtn)" stroke="#8aa4d8" stroke-width="1"/>
<rect x="260" y="1167.500" width="28" height="23.500" fill="#000" stroke="#667" stroke-width=".8"/><rect x="260" y="1167.500" width="28" height="2.500" fill="#ccd"/>
<text x="262.500" y="1179" font-family="Liberation Mono, monospace" font-size="7" fill="#fff">C:\_</text>
<path d="M321,1170 l17,-6 l14,5 l-1,19 l-15,6 l-14,-7z" fill="#d8201c"/><path d="M321,1170 l17,-6 l14,5 l-16,6z" fill="#f04030"/><path d="M336,1175 l16,-6 l-1,19 l-15,6z" fill="#b01410"/>
<text x="323" y="1188" font-family="Liberation Sans, sans-serif" font-size="15" font-weight="bold" fill="#fff">S</text>
<text x="336.500" y="1186" font-family="Liberation Sans, sans-serif" font-size="15" font-weight="bold" fill="#fff" textLength="14" lengthAdjust="spacingAndGlyphs">W</text>
<text x="330.500" y="1194.800" font-family="Liberation Sans, sans-serif" font-size="10" font-weight="bold" fill="#fff" stroke="#444" stroke-width="1.200" paint-order="stroke" textLength="21.500" lengthAdjust="spacingAndGlyphs">2015</text>
<!-- tray -->
<path d="M1743,1183.500 h7 l-3.500,-4z" fill="#fff"/>
<path d="M1764.500,1174 v13" stroke="#fff" stroke-width="1.300"/><path d="M1765.500,1175 h6 v6 h-6z" fill="#f4f4f4"/><circle cx="1773" cy="1184" r="3.800" fill="#d83030"/><path d="M1771.200,1182.200 l3.600,3.600 M1774.800,1182.200 l-3.600,3.600" stroke="#fff" stroke-width="1.200"/>
<rect x="1792" y="1176" width="10" height="8" fill="#333" stroke="#ddd" stroke-width="1"/><path d="M1789,1174 v6 h4 v-6 M1791,1180 v7 h11" fill="none" stroke="#fff" stroke-width="1.200"/><path d="M1795,1181 l6,5 M1801,1181 l-6,5" stroke="#e02020" stroke-width="1.500"/>
<path d="M1812,1178 h3 l4,-4 v14 l-4,-4 h-3z" fill="#fff"/><path d="M1821,1177.500 q2.500,3.500 0,7 M1823.500,1175.500 q4,5.500 0,11" fill="none" stroke="#fff" stroke-width="1"/>
<text x="1869.500" y="1177" text-anchor="middle" font-family="Liberation Sans, sans-serif" font-size="12" fill="#fff">2:27 PM</text>
<text x="1869.500" y="1193.700" text-anchor="middle" font-family="Liberation Sans, sans-serif" font-size="12" fill="#fff">6/26/2015</text>
<rect x="1907" y="1162" width="12" height="38" fill="#4a6aae" stroke="#8aa4d8" stroke-width="1"/><rect x="1908" y="1163" width="10" height="16" fill="#6a88c4" opacity=".7"/>
</svg>
</body></html>
